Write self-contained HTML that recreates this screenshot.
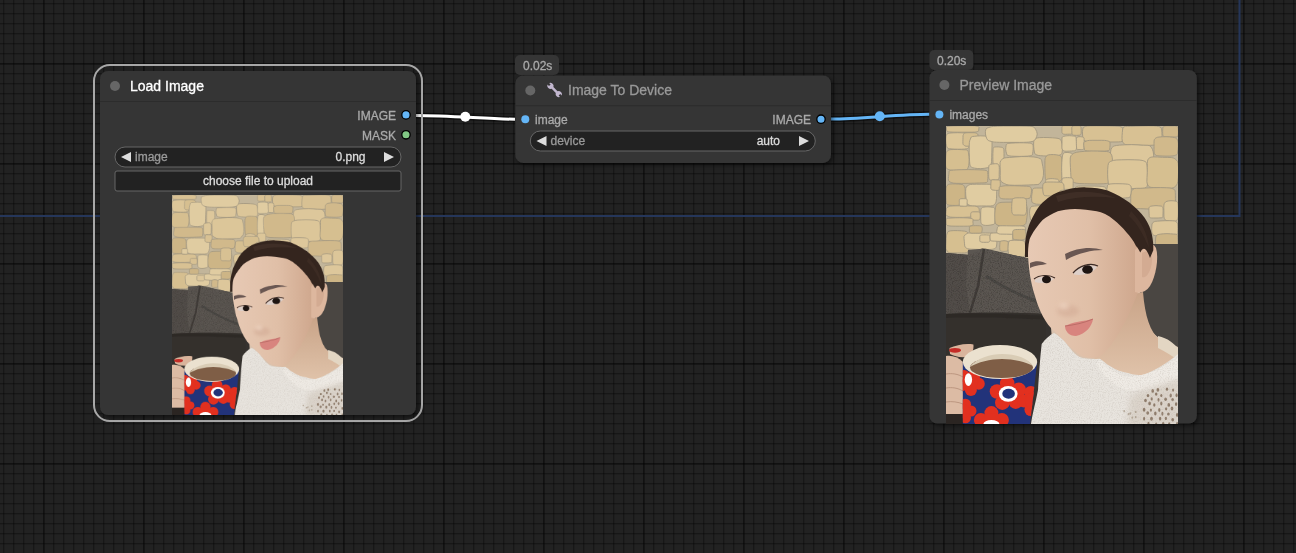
<!DOCTYPE html>
<html><head><meta charset="utf-8">
<style>
html,body{margin:0;padding:0;width:1296px;height:553px;overflow:hidden;}
body{background-color:#222;
background-image:
 repeating-linear-gradient(to right, transparent 0 43px, rgba(0,0,0,0.27) 43px 45px, transparent 45px 100px),
 repeating-linear-gradient(to bottom, transparent 0 63px, rgba(0,0,0,0.27) 63px 65px, transparent 65px 100px),
 repeating-linear-gradient(to right, transparent 0 3px, rgba(0,0,0,0.33) 3px 4px, rgba(0,0,0,0.12) 4px 5px, transparent 5px 10px),
 repeating-linear-gradient(to bottom, transparent 0 3px, rgba(0,0,0,0.33) 3px 4px, rgba(0,0,0,0.12) 4px 5px, transparent 5px 10px);
}
svg{position:absolute;left:0;top:0;will-change:transform;}
text{font-family:"Liberation Sans",sans-serif;}
</style></head><body>
<svg width="1296" height="553" viewBox="0 0 1296 553">
<defs>
 <filter id="tex" x="0" y="0" width="100%" height="100%" filterUnits="objectBoundingBox">
  <feTurbulence type="fractalNoise" baseFrequency="0.9" numOctaves="2" seed="4" result="n"/>
  <feColorMatrix in="n" type="matrix" values="0 0 0 0 0  0 0 0 0 0  0 0 0 0 0  0 0 0 -2.2 1.25" result="a"/>
  <feComposite in="SourceGraphic" in2="a" operator="in"/>
 </filter>
 <filter id="blur2" x="-50%" y="-50%" width="200%" height="200%"><feGaussianBlur stdDeviation="2"/></filter>
 <filter id="blur3" x="-20%" y="-20%" width="140%" height="140%"><feGaussianBlur stdDeviation="3"/></filter>
 <filter id="blur06" x="-5%" y="-5%" width="110%" height="110%"><feGaussianBlur stdDeviation="0.6"/></filter>
 <filter id="sh" x="-10%" y="-10%" width="120%" height="120%">
  <feDropShadow dx="2" dy="2" stdDeviation="2" flood-color="#000" flood-opacity="0.5"/>
 </filter>
 <symbol id="photo" viewBox="0 0 232 298" preserveAspectRatio="none">
<defs>
<linearGradient id="faceg" x1="0" y1="0" x2="1" y2="0">
 <stop offset="0" stop-color="#e7c9b4"/><stop offset="0.55" stop-color="#e0bfa7"/><stop offset="1" stop-color="#cea68c"/>
</linearGradient>
<linearGradient id="neckg" x1="0" y1="0" x2="0" y2="1">
 <stop offset="0" stop-color="#c9a488"/><stop offset="1" stop-color="#e0c3aa"/>
</linearGradient>
<clipPath id="mugclip"><path d="M16.8 236 L16.8 298 L84 298 L91.2 236 Z"/></clipPath>
</defs>
<rect width="232" height="298" fill="#c2b59a"/>
<g filter="url(#blur06)">
<path d="M33.0 1.9 Q32.7 3.0 32.8 4.0 Q33.0 5.1 32.1 5.3 Q31.3 5.6 30.6 5.8 Q30.0 6.0 28.4 6.1 Q26.8 6.2 21.6 6.2 Q16.5 6.2 11.3 6.2 Q6.1 6.2 4.8 6.0 Q3.6 5.9 2.4 5.8 Q1.3 5.6 1.0 5.3 Q0.8 5.0 0.6 4.0 Q0.4 3.0 0.4 2.0 Q0.3 1.0 0.6 0.6 Q0.8 0.3 2.1 0.2 Q3.5 0.1 4.9 -0.0 Q6.3 -0.1 11.4 -0.2 Q16.5 -0.3 21.9 -0.3 Q27.3 -0.3 28.7 -0.2 Q30.0 -0.0 30.8 0.2 Q31.7 0.4 32.5 0.6 Q33.4 0.9 33.0 1.9Z" fill="#d8c193" stroke="#a39780" stroke-width="0.9"/>
<path d="M23.3 12.5 Q23.3 15.0 23.3 17.6 Q23.4 20.1 23.1 20.9 Q22.7 21.7 22.1 22.1 Q21.5 22.6 20.3 22.8 Q19.2 23.1 15.5 23.2 Q11.8 23.3 8.1 23.1 Q4.5 22.8 3.3 22.7 Q2.0 22.6 1.6 22.0 Q1.1 21.5 0.8 20.7 Q0.4 20.0 0.0 17.5 Q-0.4 15.0 -0.2 12.4 Q-0.0 9.8 0.3 9.1 Q0.7 8.3 1.4 7.9 Q2.1 7.5 3.2 7.2 Q4.3 6.9 8.0 6.8 Q11.7 6.6 15.5 6.8 Q19.2 7.0 20.5 7.1 Q21.7 7.2 22.2 7.8 Q22.6 8.4 22.9 9.2 Q23.2 10.0 23.3 12.5Z" fill="#dcc699" stroke="#a39780" stroke-width="0.9"/>
<path d="M32.1 11.4 Q32.1 13.5 32.1 15.6 Q32.1 17.7 31.9 18.3 Q31.6 19.0 31.3 19.4 Q30.9 19.9 30.2 20.0 Q29.4 20.2 27.0 20.2 Q24.5 20.1 22.0 20.2 Q19.5 20.4 19.0 19.9 Q18.4 19.5 18.0 19.2 Q17.5 18.9 17.1 18.4 Q16.8 17.8 16.9 15.6 Q17.0 13.5 17.0 11.4 Q16.9 9.3 17.3 8.8 Q17.7 8.3 17.9 7.7 Q18.2 7.2 18.9 7.0 Q19.6 6.8 22.0 6.7 Q24.5 6.7 27.0 6.7 Q29.5 6.7 30.1 7.1 Q30.6 7.4 31.2 7.7 Q31.7 8.0 31.9 8.6 Q32.1 9.3 32.1 11.4Z" fill="#d6bf90" stroke="#a39780" stroke-width="0.9"/>
<path d="M46.0 21.0 Q45.8 26.2 45.7 31.2 Q45.6 36.2 45.3 37.7 Q45.1 39.3 44.6 40.4 Q44.1 41.5 42.9 41.6 Q41.6 41.7 38.2 42.3 Q34.8 42.9 31.2 42.5 Q27.7 42.1 26.6 41.7 Q25.4 41.4 24.8 40.5 Q24.1 39.7 23.8 38.1 Q23.6 36.4 23.4 31.3 Q23.1 26.3 23.2 21.0 Q23.2 15.7 23.8 14.4 Q24.4 13.2 24.8 11.9 Q25.2 10.7 26.4 10.5 Q27.7 10.4 31.2 10.0 Q34.7 9.7 38.3 10.0 Q41.9 10.2 42.8 10.9 Q43.8 11.5 44.4 12.4 Q45.1 13.2 45.6 14.5 Q46.2 15.8 46.0 21.0Z" fill="#e0cca1" stroke="#a39780" stroke-width="0.9"/>
<path d="M90.7 5.5 Q91.8 8.0 90.7 10.5 Q89.7 13.0 89.3 13.8 Q88.9 14.6 87.6 15.1 Q86.2 15.6 84.1 15.9 Q82.0 16.3 73.7 16.4 Q65.5 16.4 57.3 16.4 Q49.1 16.3 47.1 15.9 Q45.2 15.4 43.7 15.0 Q42.2 14.6 41.5 13.8 Q40.8 13.1 40.0 10.5 Q39.2 8.0 39.4 5.3 Q39.5 2.7 41.1 2.1 Q42.7 1.5 44.0 1.1 Q45.4 0.6 47.6 0.4 Q49.9 0.1 57.7 0.0 Q65.5 -0.0 73.5 -0.0 Q81.4 -0.0 83.9 0.2 Q86.3 0.4 87.4 0.9 Q88.5 1.5 89.0 2.3 Q89.5 3.1 90.7 5.5Z" fill="#e0cca1" stroke="#a39780" stroke-width="0.9"/>
<path d="M22.9 30.6 Q23.3 33.8 23.0 37.0 Q22.8 40.2 22.3 41.1 Q21.9 41.9 21.6 42.8 Q21.2 43.6 20.1 44.0 Q19.1 44.4 15.3 44.3 Q11.5 44.3 7.8 44.3 Q4.1 44.2 3.1 43.7 Q2.1 43.3 1.3 42.9 Q0.4 42.4 0.0 41.5 Q-0.4 40.5 -0.4 37.1 Q-0.4 33.8 -0.2 30.5 Q-0.0 27.2 0.4 26.3 Q0.9 25.4 1.5 24.8 Q2.1 24.2 3.2 23.9 Q4.2 23.5 7.9 23.5 Q11.5 23.4 15.1 23.6 Q18.6 23.8 20.0 23.8 Q21.3 23.8 21.7 24.6 Q22.2 25.3 22.4 26.4 Q22.6 27.4 22.9 30.6Z" fill="#d6bf90" stroke="#a39780" stroke-width="0.9"/>
<path d="M58.0 27.5 Q58.0 30.5 58.0 33.4 Q58.0 36.4 57.8 37.2 Q57.6 38.1 57.3 38.7 Q57.1 39.3 56.5 39.5 Q56.0 39.6 54.2 40.1 Q52.5 40.5 50.7 40.3 Q48.9 40.1 48.4 39.6 Q48.0 39.2 47.7 38.7 Q47.3 38.2 47.1 37.3 Q46.9 36.5 46.9 33.5 Q46.8 30.5 46.9 27.6 Q47.0 24.6 47.1 23.5 Q47.1 22.4 47.4 21.8 Q47.7 21.2 48.3 21.1 Q48.9 21.0 50.7 20.9 Q52.5 20.8 54.2 21.1 Q56.0 21.3 56.5 21.6 Q57.0 21.9 57.4 22.3 Q57.7 22.8 57.9 23.7 Q58.0 24.5 58.0 27.5Z" fill="#ddc79b" stroke="#a39780" stroke-width="0.9"/>
<path d="M87.2 21.3 Q87.2 23.5 86.9 25.6 Q86.6 27.6 86.5 28.4 Q86.5 29.1 85.5 29.4 Q84.4 29.6 83.3 29.9 Q82.2 30.2 77.8 30.3 Q73.5 30.5 69.1 30.3 Q64.8 30.2 63.7 29.9 Q62.6 29.6 61.7 29.3 Q60.8 29.0 60.7 28.3 Q60.6 27.6 60.0 25.5 Q59.5 23.5 59.8 21.4 Q60.1 19.3 60.3 18.6 Q60.5 17.9 61.6 17.6 Q62.6 17.4 63.9 17.2 Q65.2 17.0 69.3 16.9 Q73.5 16.7 77.8 16.8 Q82.0 16.9 83.4 17.1 Q84.7 17.2 85.4 17.6 Q86.2 18.0 86.7 18.6 Q87.2 19.2 87.2 21.3Z" fill="#ddc79b" stroke="#a39780" stroke-width="0.9"/>
<path d="M116.0 18.2 Q116.5 21.0 116.4 24.0 Q116.2 26.9 115.7 27.7 Q115.3 28.6 114.2 28.9 Q113.2 29.3 112.0 29.7 Q110.9 30.0 106.4 30.1 Q102.0 30.1 97.7 29.9 Q93.5 29.7 92.2 29.4 Q91.0 29.1 90.1 28.7 Q89.2 28.3 88.8 27.5 Q88.4 26.6 88.0 23.8 Q87.6 21.0 87.6 18.0 Q87.6 15.0 88.3 14.3 Q89.0 13.6 89.6 12.9 Q90.1 12.2 91.5 11.9 Q92.8 11.6 97.4 11.5 Q102.0 11.5 106.4 11.8 Q110.8 12.1 112.0 12.4 Q113.2 12.7 114.0 13.2 Q114.7 13.7 115.1 14.6 Q115.5 15.4 116.0 18.2Z" fill="#dcc699" stroke="#a39780" stroke-width="0.9"/>
<path d="M96.9 40.7 Q97.9 45.0 97.4 49.5 Q96.8 53.9 95.7 55.0 Q94.5 56.0 94.0 57.2 Q93.5 58.4 91.2 58.6 Q88.8 58.7 82.2 59.0 Q75.5 59.3 68.6 59.3 Q61.6 59.3 60.1 58.4 Q58.6 57.6 57.2 57.0 Q55.9 56.3 54.9 55.2 Q54.0 54.0 54.2 49.5 Q54.4 45.0 54.1 40.4 Q53.7 35.9 54.7 34.7 Q55.8 33.6 56.8 32.7 Q57.9 31.9 60.2 31.7 Q62.5 31.6 69.0 31.0 Q75.5 30.3 82.4 30.6 Q89.2 30.9 91.1 31.5 Q92.9 32.0 94.3 32.7 Q95.7 33.3 95.8 34.9 Q95.9 36.4 96.9 40.7Z" fill="#dcc699" stroke="#a39780" stroke-width="0.9"/>
<path d="M41.9 48.4 Q42.0 50.5 41.8 52.5 Q41.6 54.6 41.6 55.4 Q41.6 56.1 40.3 56.5 Q39.1 56.8 36.9 56.9 Q34.6 56.9 28.4 57.2 Q22.3 57.4 15.6 57.4 Q9.0 57.4 7.3 57.1 Q5.6 56.8 4.7 56.3 Q3.8 55.9 3.0 55.3 Q2.2 54.7 2.4 52.6 Q2.5 50.5 2.8 48.5 Q3.1 46.5 3.0 45.7 Q2.8 44.8 4.2 44.5 Q5.6 44.2 7.6 44.1 Q9.5 43.9 15.9 43.7 Q22.2 43.5 28.6 43.7 Q34.9 43.9 37.0 44.0 Q39.2 44.1 40.3 44.5 Q41.4 44.9 41.6 45.7 Q41.7 46.4 41.9 48.4Z" fill="#d1b98b" stroke="#a39780" stroke-width="0.9"/>
<path d="M53.3 43.4 Q53.2 46.0 53.2 48.6 Q53.3 51.2 53.0 51.9 Q52.8 52.6 52.5 53.1 Q52.3 53.6 51.8 53.9 Q51.4 54.3 49.7 54.1 Q48.0 53.9 46.3 54.1 Q44.7 54.2 44.1 54.0 Q43.6 53.8 43.4 53.3 Q43.1 52.7 42.9 52.0 Q42.7 51.3 42.7 48.6 Q42.7 46.0 42.7 43.4 Q42.7 40.7 42.9 39.9 Q43.0 39.2 43.5 38.9 Q43.9 38.7 44.3 38.4 Q44.8 38.2 46.4 38.0 Q48.0 37.8 49.7 37.7 Q51.4 37.7 51.9 38.0 Q52.3 38.3 52.6 38.8 Q52.9 39.3 53.1 40.0 Q53.3 40.7 53.3 43.4Z" fill="#dcc699" stroke="#a39780" stroke-width="0.9"/>
<path d="M116.1 38.2 Q116.2 42.5 116.2 46.8 Q116.2 51.2 115.9 52.4 Q115.5 53.6 115.0 54.2 Q114.4 54.9 113.7 55.4 Q113.0 55.9 110.2 56.1 Q107.5 56.2 104.7 56.2 Q101.9 56.2 101.3 55.4 Q100.7 54.7 100.1 54.1 Q99.5 53.6 99.3 52.2 Q99.1 50.9 99.0 46.7 Q98.9 42.5 98.9 38.1 Q98.8 33.8 99.1 32.6 Q99.5 31.4 100.0 30.7 Q100.4 29.9 101.2 29.4 Q101.9 28.8 104.7 28.6 Q107.5 28.4 110.2 28.8 Q112.9 29.2 113.8 29.5 Q114.6 29.8 115.1 30.6 Q115.5 31.4 115.8 32.7 Q116.0 34.0 116.1 38.2Z" fill="#cdb586" stroke="#a39780" stroke-width="0.9"/>
<path d="M19.2 65.1 Q19.2 68.5 19.2 71.9 Q19.2 75.4 18.8 76.3 Q18.4 77.2 17.8 77.6 Q17.2 78.1 16.4 78.6 Q15.6 79.0 12.5 79.3 Q9.5 79.5 6.4 79.4 Q3.2 79.3 2.3 79.0 Q1.4 78.7 0.8 78.0 Q0.3 77.4 0.3 76.2 Q0.2 75.0 0.0 71.8 Q-0.2 68.5 -0.1 65.2 Q0.1 61.9 0.4 60.9 Q0.7 59.9 1.2 59.4 Q1.8 58.8 2.6 58.3 Q3.4 57.9 6.4 57.9 Q9.5 57.9 12.5 58.1 Q15.4 58.3 16.3 58.5 Q17.2 58.8 17.7 59.5 Q18.1 60.1 18.7 60.9 Q19.2 61.7 19.2 65.1Z" fill="#cdb586" stroke="#a39780" stroke-width="0.9"/>
<path d="M50.7 65.4 Q50.7 69.0 50.5 72.4 Q50.2 75.9 49.7 76.8 Q49.2 77.8 48.5 78.5 Q47.8 79.3 46.5 79.7 Q45.2 80.2 40.3 80.0 Q35.4 79.8 30.4 80.1 Q25.4 80.3 24.3 79.7 Q23.2 79.0 22.0 78.6 Q20.9 78.2 20.7 77.0 Q20.5 75.8 20.1 72.4 Q19.6 69.0 19.6 65.4 Q19.6 61.7 20.4 60.9 Q21.2 60.0 22.1 59.4 Q22.9 58.8 24.3 58.5 Q25.8 58.2 30.6 58.2 Q35.3 58.2 40.1 58.2 Q44.9 58.2 46.3 58.5 Q47.7 58.9 48.6 59.4 Q49.5 60.0 50.2 60.9 Q50.8 61.9 50.7 65.4Z" fill="#e0cca1" stroke="#a39780" stroke-width="0.9"/>
<path d="M54.3 57.3 Q54.3 59.0 54.2 60.6 Q54.2 62.3 53.9 62.7 Q53.7 63.1 53.6 63.6 Q53.5 64.0 53.0 64.1 Q52.5 64.3 51.0 64.4 Q49.5 64.4 48.1 64.2 Q46.6 64.0 46.2 63.9 Q45.7 63.7 45.5 63.4 Q45.3 63.1 45.0 62.7 Q44.7 62.4 44.8 60.7 Q44.8 59.0 44.9 57.4 Q45.0 55.8 45.1 55.3 Q45.2 54.8 45.3 54.4 Q45.5 54.0 46.0 53.9 Q46.5 53.7 48.0 53.8 Q49.5 53.9 50.9 53.9 Q52.4 54.0 52.9 54.0 Q53.5 54.0 53.7 54.4 Q53.9 54.7 54.1 55.2 Q54.2 55.7 54.3 57.3Z" fill="#d8c193" stroke="#a39780" stroke-width="0.9"/>
<path d="M85.5 64.3 Q85.5 66.5 85.0 68.6 Q84.4 70.6 84.3 71.4 Q84.3 72.1 83.0 72.3 Q81.7 72.6 80.2 72.7 Q78.6 72.8 73.7 72.9 Q68.8 73.0 63.7 73.0 Q58.7 73.0 57.0 72.9 Q55.4 72.7 54.7 72.3 Q54.0 71.8 53.5 71.2 Q53.0 70.6 52.9 68.6 Q52.9 66.5 53.1 64.5 Q53.3 62.5 53.2 61.6 Q53.1 60.8 54.3 60.6 Q55.6 60.4 56.9 60.0 Q58.2 59.7 63.5 59.7 Q68.7 59.7 73.7 59.9 Q78.6 60.1 80.4 60.2 Q82.2 60.2 83.3 60.5 Q84.3 60.9 84.9 61.5 Q85.4 62.1 85.5 64.3Z" fill="#d1b98b" stroke="#a39780" stroke-width="0.9"/>
<path d="M113.1 57.7 Q113.1 60.0 113.0 62.2 Q113.0 64.4 112.8 65.1 Q112.6 65.8 112.3 66.3 Q112.0 66.8 111.3 66.9 Q110.5 67.0 108.4 67.1 Q106.3 67.2 104.1 67.1 Q102.0 66.9 101.3 66.7 Q100.7 66.6 100.4 66.1 Q100.1 65.6 99.8 65.0 Q99.5 64.4 99.5 62.2 Q99.5 60.0 99.4 57.7 Q99.3 55.4 99.5 54.8 Q99.8 54.1 100.3 53.8 Q100.7 53.5 101.3 53.2 Q101.9 52.9 104.1 52.7 Q106.2 52.5 108.4 52.8 Q110.5 53.1 111.3 53.2 Q112.0 53.2 112.3 53.7 Q112.6 54.2 112.9 54.8 Q113.1 55.5 113.1 57.7Z" fill="#ddc79b" stroke="#a39780" stroke-width="0.9"/>
<path d="M107.5 67.3 Q107.6 70.0 107.2 72.5 Q106.8 75.1 106.5 75.8 Q106.1 76.5 105.5 76.9 Q105.0 77.4 104.0 77.6 Q103.0 77.9 99.8 78.2 Q96.5 78.5 93.1 78.3 Q89.7 78.2 88.9 77.8 Q88.1 77.3 87.2 77.1 Q86.3 76.9 86.0 76.1 Q85.6 75.3 85.6 72.7 Q85.5 70.0 86.0 67.5 Q86.4 65.1 86.5 64.2 Q86.6 63.3 87.1 62.8 Q87.6 62.2 88.7 62.1 Q89.9 62.0 93.2 62.0 Q96.5 62.1 99.9 62.0 Q103.3 61.8 104.2 62.2 Q105.1 62.5 105.7 62.9 Q106.3 63.4 106.9 64.0 Q107.4 64.7 107.5 67.3Z" fill="#d6bf90" stroke="#a39780" stroke-width="0.9"/>
<path d="M33.2 83.7 Q33.3 85.5 33.3 87.3 Q33.2 89.1 32.5 89.5 Q31.8 90.0 31.1 90.4 Q30.3 90.8 28.7 90.9 Q27.1 91.0 21.9 91.2 Q16.8 91.5 11.3 91.4 Q5.8 91.3 4.4 91.1 Q3.1 90.8 2.3 90.4 Q1.6 90.0 0.6 89.6 Q-0.4 89.2 -0.1 87.4 Q0.1 85.5 0.3 83.7 Q0.4 82.0 1.1 81.5 Q1.9 81.0 2.6 80.7 Q3.2 80.3 4.7 80.1 Q6.2 79.9 11.5 79.8 Q16.7 79.8 21.9 79.9 Q27.0 80.0 28.7 80.1 Q30.4 80.2 31.0 80.6 Q31.6 81.0 32.3 81.5 Q33.0 82.0 33.2 83.7Z" fill="#d8c193" stroke="#a39780" stroke-width="0.9"/>
<path d="M49.2 87.1 Q49.3 90.0 49.2 92.9 Q49.0 95.7 48.8 96.5 Q48.5 97.3 48.2 97.9 Q47.9 98.5 47.1 98.6 Q46.4 98.7 44.2 99.1 Q42.0 99.5 39.7 99.4 Q37.4 99.3 36.8 98.8 Q36.3 98.2 35.7 98.0 Q35.1 97.7 35.0 96.8 Q34.8 95.9 34.7 92.9 Q34.7 90.0 34.7 87.1 Q34.8 84.1 35.0 83.3 Q35.2 82.4 35.7 82.0 Q36.2 81.5 36.9 81.3 Q37.6 81.1 39.8 80.9 Q42.0 80.7 44.2 81.0 Q46.4 81.2 47.2 81.3 Q48.0 81.3 48.4 81.9 Q48.8 82.4 48.9 83.3 Q49.1 84.2 49.2 87.1Z" fill="#e0cca1" stroke="#a39780" stroke-width="0.9"/>
<path d="M81.3 84.2 Q81.5 88.0 80.9 91.7 Q80.4 95.4 80.1 96.6 Q79.9 97.9 79.0 98.5 Q78.1 99.2 76.7 99.7 Q75.4 100.3 70.2 100.4 Q65.0 100.5 59.8 100.4 Q54.6 100.2 53.3 99.8 Q51.9 99.3 50.8 98.7 Q49.7 98.2 49.3 96.9 Q48.9 95.7 48.8 91.9 Q48.6 88.0 49.1 84.3 Q49.5 80.6 50.1 79.5 Q50.7 78.5 51.5 77.8 Q52.3 77.1 53.7 76.7 Q55.0 76.2 60.0 76.2 Q65.0 76.2 70.2 76.0 Q75.4 75.7 76.7 76.3 Q78.1 76.8 79.0 77.4 Q80.0 78.1 80.5 79.2 Q81.0 80.3 81.3 84.2Z" fill="#cdb586" stroke="#a39780" stroke-width="0.9"/>
<path d="M80.5 77.8 Q80.6 80.5 80.6 83.2 Q80.6 85.9 80.2 86.6 Q79.9 87.3 79.7 88.0 Q79.5 88.8 78.8 89.0 Q78.1 89.3 75.7 89.1 Q73.3 88.9 70.9 89.0 Q68.6 89.1 67.8 88.9 Q67.1 88.7 66.7 88.1 Q66.4 87.5 66.1 86.8 Q65.7 86.1 65.7 83.3 Q65.6 80.5 65.8 77.8 Q66.1 75.2 66.2 74.2 Q66.2 73.3 66.8 73.0 Q67.3 72.7 67.9 72.3 Q68.5 71.9 70.9 71.8 Q73.2 71.8 75.7 71.8 Q78.1 71.7 78.6 72.2 Q79.1 72.8 79.7 73.0 Q80.3 73.2 80.4 74.2 Q80.5 75.1 80.5 77.8Z" fill="#d8c193" stroke="#a39780" stroke-width="0.9"/>
<path d="M34.2 88.7 Q34.3 90.0 34.2 91.3 Q34.0 92.6 33.9 93.0 Q33.7 93.3 33.5 93.6 Q33.3 93.8 32.9 94.0 Q32.5 94.3 31.0 94.2 Q29.5 94.2 28.0 94.2 Q26.5 94.2 26.2 94.0 Q25.8 93.8 25.5 93.5 Q25.3 93.3 25.1 93.0 Q24.9 92.6 24.8 91.3 Q24.7 90.0 24.7 88.6 Q24.8 87.3 24.9 86.9 Q25.1 86.5 25.4 86.3 Q25.7 86.2 26.1 86.0 Q26.5 85.8 28.0 85.8 Q29.5 85.8 31.0 85.8 Q32.5 85.8 32.8 86.0 Q33.2 86.2 33.6 86.3 Q34.0 86.4 34.0 86.9 Q34.0 87.4 34.2 88.7Z" fill="#d8c193" stroke="#a39780" stroke-width="0.9"/>
<path d="M21.2 75.3 Q21.1 76.5 21.1 77.7 Q21.2 78.8 21.1 79.2 Q21.0 79.6 20.8 79.9 Q20.6 80.1 20.2 80.1 Q19.7 80.2 18.5 80.2 Q17.3 80.2 16.0 80.1 Q14.8 80.1 14.3 80.1 Q13.9 80.1 13.8 79.8 Q13.7 79.5 13.5 79.2 Q13.3 78.9 13.3 77.7 Q13.4 76.5 13.3 75.3 Q13.3 74.1 13.4 73.7 Q13.4 73.3 13.8 73.2 Q14.1 73.1 14.4 72.9 Q14.7 72.7 16.0 72.7 Q17.2 72.7 18.5 72.7 Q19.8 72.7 20.2 72.8 Q20.5 73.0 20.7 73.3 Q20.9 73.5 21.1 73.8 Q21.3 74.1 21.2 75.3Z" fill="#e0cca1" stroke="#a39780" stroke-width="0.9"/>
<path d="M27.0 94.6 Q26.8 96.0 27.1 97.4 Q27.4 98.8 26.8 99.1 Q26.2 99.5 25.3 99.7 Q24.5 99.9 23.3 100.1 Q22.2 100.2 17.8 100.2 Q13.5 100.2 9.3 100.2 Q5.0 100.1 3.9 100.0 Q2.8 99.8 2.0 99.6 Q1.1 99.4 0.7 99.0 Q0.3 98.6 0.2 97.3 Q0.0 96.0 0.1 94.7 Q0.2 93.4 0.4 92.9 Q0.5 92.4 1.6 92.3 Q2.7 92.2 4.0 92.1 Q5.3 92.0 9.4 91.8 Q13.5 91.7 17.7 91.8 Q21.9 91.9 23.0 92.1 Q24.2 92.2 25.0 92.4 Q25.9 92.6 26.6 92.9 Q27.3 93.3 27.0 94.6Z" fill="#d8c193" stroke="#a39780" stroke-width="0.9"/>
<path d="M127.2 2.6 Q127.2 4.0 127.1 5.3 Q127.0 6.6 126.8 7.0 Q126.6 7.3 126.3 7.6 Q126.0 7.8 125.6 8.0 Q125.2 8.3 123.3 8.2 Q121.5 8.2 119.6 8.3 Q117.8 8.3 117.4 8.1 Q117.0 7.8 116.6 7.6 Q116.3 7.4 116.1 7.0 Q115.9 6.7 115.9 5.3 Q115.9 4.0 115.9 2.7 Q115.9 1.4 116.0 0.9 Q116.0 0.4 116.4 0.2 Q116.7 -0.0 117.3 -0.2 Q117.8 -0.3 119.7 -0.3 Q121.5 -0.3 123.4 -0.3 Q125.2 -0.3 125.8 -0.2 Q126.3 -0.1 126.6 0.2 Q126.8 0.5 127.0 0.9 Q127.2 1.3 127.2 2.6Z" fill="#d8c193" stroke="#a39780" stroke-width="0.9"/>
<path d="M135.1 3.1 Q135.2 4.5 135.2 6.0 Q135.2 7.5 135.0 7.9 Q134.7 8.2 134.6 8.6 Q134.5 9.0 134.0 9.1 Q133.5 9.2 132.0 9.3 Q130.5 9.4 129.0 9.3 Q127.5 9.2 127.1 9.0 Q126.8 8.7 126.5 8.5 Q126.2 8.3 126.0 7.9 Q125.9 7.4 125.9 6.0 Q125.8 4.5 125.8 3.0 Q125.8 1.5 125.9 1.0 Q126.1 0.6 126.4 0.4 Q126.7 0.2 127.1 0.1 Q127.6 -0.1 129.0 -0.2 Q130.5 -0.2 132.0 -0.2 Q133.5 -0.2 133.9 0.0 Q134.2 0.3 134.6 0.4 Q134.9 0.6 135.0 1.1 Q135.0 1.6 135.1 3.1Z" fill="#d6bf90" stroke="#a39780" stroke-width="0.9"/>
<path d="M177.7 5.5 Q178.1 8.0 177.6 10.5 Q177.2 13.0 177.1 13.9 Q177.0 14.9 175.9 15.4 Q174.7 15.9 172.4 15.9 Q170.1 16.0 163.6 16.0 Q157.0 16.0 150.6 15.9 Q144.1 15.9 142.3 15.6 Q140.5 15.3 139.2 14.9 Q137.9 14.6 137.4 13.8 Q137.0 13.0 136.7 10.5 Q136.4 8.0 136.5 5.5 Q136.7 3.0 137.1 2.1 Q137.5 1.3 138.5 0.8 Q139.4 0.2 141.5 -0.0 Q143.6 -0.2 150.3 -0.2 Q157.0 -0.2 163.5 -0.1 Q170.1 0.0 172.1 0.2 Q174.1 0.4 175.1 0.9 Q176.2 1.4 176.8 2.2 Q177.4 2.9 177.7 5.5Z" fill="#d8c193" stroke="#a39780" stroke-width="0.9"/>
<path d="M215.9 6.5 Q216.2 9.5 215.8 12.5 Q215.5 15.5 215.1 16.5 Q214.7 17.5 213.5 17.9 Q212.3 18.4 210.6 18.8 Q208.9 19.2 202.4 19.4 Q196.0 19.5 189.9 19.1 Q183.8 18.7 181.5 18.7 Q179.2 18.7 178.5 18.0 Q177.7 17.3 176.9 16.5 Q176.1 15.6 176.0 12.6 Q176.0 9.5 176.3 6.5 Q176.6 3.5 176.8 2.5 Q177.1 1.5 178.1 0.9 Q179.1 0.2 181.5 0.3 Q183.8 0.3 189.9 0.1 Q196.0 -0.1 202.4 -0.2 Q208.8 -0.2 210.7 0.1 Q212.6 0.4 213.9 0.9 Q215.2 1.4 215.4 2.4 Q215.7 3.4 215.9 6.5Z" fill="#d8c193" stroke="#a39780" stroke-width="0.9"/>
<path d="M232.3 3.7 Q232.5 5.5 232.4 7.3 Q232.3 9.2 232.0 9.7 Q231.8 10.3 231.4 10.6 Q231.0 11.0 230.1 11.0 Q229.2 11.0 226.9 11.0 Q224.5 11.1 222.2 11.0 Q219.8 11.0 219.0 10.9 Q218.2 10.8 217.8 10.5 Q217.3 10.2 217.0 9.7 Q216.7 9.2 216.7 7.4 Q216.6 5.5 216.7 3.7 Q216.8 1.9 217.0 1.3 Q217.3 0.8 217.8 0.5 Q218.3 0.2 219.0 0.0 Q219.7 -0.2 222.1 -0.1 Q224.5 -0.0 227.0 -0.1 Q229.4 -0.3 230.0 0.0 Q230.6 0.3 231.2 0.5 Q231.8 0.7 232.0 1.3 Q232.2 1.9 232.3 3.7Z" fill="#d1b98b" stroke="#a39780" stroke-width="0.9"/>
<path d="M130.5 15.2 Q130.8 17.5 130.7 19.9 Q130.6 22.3 130.3 23.0 Q130.1 23.7 129.8 24.2 Q129.4 24.7 128.6 24.8 Q127.8 24.8 125.5 25.0 Q123.3 25.1 120.8 25.2 Q118.4 25.3 117.9 24.9 Q117.4 24.4 116.9 24.0 Q116.5 23.6 116.1 23.0 Q115.8 22.4 115.9 20.0 Q116.1 17.5 116.0 15.1 Q115.9 12.7 116.0 11.8 Q116.1 11.0 116.7 10.8 Q117.3 10.5 118.0 10.3 Q118.6 10.0 120.9 9.8 Q123.2 9.6 125.5 9.8 Q127.8 10.1 128.6 10.2 Q129.3 10.4 129.7 10.8 Q130.1 11.2 130.2 12.0 Q130.3 12.9 130.5 15.2Z" fill="#e0cca1" stroke="#a39780" stroke-width="0.9"/>
<path d="M138.2 15.3 Q138.2 17.2 138.1 19.2 Q138.0 21.1 138.0 21.8 Q137.9 22.5 137.7 22.9 Q137.5 23.3 137.1 23.4 Q136.7 23.6 135.5 23.6 Q134.3 23.6 133.0 23.6 Q131.7 23.7 131.3 23.6 Q130.9 23.4 130.8 22.9 Q130.6 22.4 130.6 21.8 Q130.5 21.2 130.4 19.2 Q130.3 17.3 130.3 15.2 Q130.3 13.2 130.4 12.6 Q130.5 11.9 130.8 11.7 Q131.1 11.4 131.4 11.1 Q131.7 10.7 133.0 10.7 Q134.2 10.6 135.5 10.8 Q136.8 10.9 137.1 11.2 Q137.4 11.4 137.7 11.6 Q138.1 11.8 138.1 12.5 Q138.1 13.3 138.2 15.3Z" fill="#ddc79b" stroke="#a39780" stroke-width="0.9"/>
<path d="M164.1 18.0 Q164.1 19.8 163.9 21.4 Q163.7 23.1 163.6 23.7 Q163.5 24.3 162.4 24.5 Q161.3 24.6 160.3 24.9 Q159.3 25.2 155.2 25.2 Q151.0 25.3 146.8 25.3 Q142.5 25.3 141.4 25.0 Q140.4 24.8 139.4 24.6 Q138.5 24.3 138.5 23.7 Q138.6 23.1 138.1 21.4 Q137.7 19.8 137.7 18.0 Q137.7 16.2 138.5 15.8 Q139.3 15.5 140.1 15.2 Q140.8 14.9 141.7 14.6 Q142.7 14.3 146.9 14.3 Q151.0 14.3 155.2 14.3 Q159.4 14.3 160.4 14.6 Q161.4 14.8 162.2 15.1 Q163.0 15.3 163.6 15.8 Q164.1 16.3 164.1 18.0Z" fill="#d1b98b" stroke="#a39780" stroke-width="0.9"/>
<path d="M207.2 25.8 Q207.9 29.0 207.7 32.3 Q207.4 35.6 206.2 36.4 Q205.1 37.1 203.8 37.6 Q202.5 38.1 201.0 38.7 Q199.5 39.3 192.5 39.4 Q185.5 39.4 179.0 39.0 Q172.5 38.6 170.2 38.6 Q167.8 38.5 166.8 37.8 Q165.9 37.2 165.2 36.2 Q164.6 35.3 164.4 32.2 Q164.2 29.0 164.6 25.9 Q164.9 22.8 165.7 21.9 Q166.5 21.1 167.4 20.4 Q168.4 19.8 170.3 19.5 Q172.2 19.1 178.8 18.8 Q185.5 18.4 192.0 18.9 Q198.6 19.3 201.1 19.3 Q203.6 19.3 204.2 20.1 Q204.9 21.0 205.6 21.8 Q206.4 22.7 207.2 25.8Z" fill="#ddc79b" stroke="#a39780" stroke-width="0.9"/>
<path d="M232.3 17.4 Q232.5 20.5 232.0 23.4 Q231.5 26.4 231.5 27.4 Q231.4 28.5 230.5 28.8 Q229.6 29.2 228.6 29.6 Q227.6 30.0 223.8 30.1 Q220.0 30.2 216.2 30.0 Q212.5 29.9 211.2 29.7 Q210.0 29.6 209.4 29.0 Q208.8 28.3 208.4 27.5 Q207.9 26.6 208.0 23.6 Q208.1 20.5 208.0 17.4 Q207.9 14.4 208.4 13.5 Q208.9 12.7 209.6 12.2 Q210.3 11.7 211.3 11.3 Q212.4 11.0 216.2 10.8 Q220.0 10.6 223.7 10.9 Q227.3 11.3 228.5 11.6 Q229.6 11.8 230.2 12.4 Q230.8 12.9 231.4 13.7 Q232.0 14.4 232.3 17.4Z" fill="#d1b98b" stroke="#a39780" stroke-width="0.9"/>
<path d="M128.3 36.6 Q128.5 41.0 128.3 45.5 Q128.2 49.9 127.9 51.1 Q127.6 52.2 127.4 53.2 Q127.1 54.2 126.5 54.5 Q125.8 54.7 123.9 54.8 Q122.0 54.9 120.1 54.6 Q118.3 54.3 117.6 54.3 Q116.9 54.3 116.5 53.6 Q116.1 52.8 115.9 51.4 Q115.8 49.9 115.7 45.5 Q115.5 41.0 115.8 36.7 Q116.1 32.5 116.3 31.1 Q116.4 29.8 116.7 28.9 Q117.0 28.0 117.5 27.3 Q118.0 26.6 120.0 26.5 Q122.0 26.3 123.9 26.8 Q125.9 27.3 126.4 27.8 Q126.9 28.3 127.3 28.9 Q127.7 29.6 127.9 30.9 Q128.1 32.2 128.3 36.6Z" fill="#e0cca1" stroke="#a39780" stroke-width="0.9"/>
<path d="M166.5 36.1 Q166.6 41.5 166.3 46.8 Q166.1 52.1 165.5 53.7 Q164.9 55.3 163.7 56.2 Q162.4 57.1 160.4 57.5 Q158.3 57.9 151.6 57.9 Q145.0 57.9 138.5 57.7 Q132.0 57.6 130.1 57.1 Q128.1 56.6 126.7 55.9 Q125.2 55.3 125.1 53.4 Q125.0 51.5 124.7 46.5 Q124.4 41.5 124.2 36.2 Q123.9 30.9 125.0 29.6 Q126.0 28.3 127.3 27.5 Q128.6 26.8 130.4 26.3 Q132.3 25.8 138.7 25.3 Q145.0 24.8 151.5 25.1 Q158.0 25.4 160.4 25.5 Q162.7 25.6 163.8 26.6 Q165.0 27.6 165.7 29.2 Q166.5 30.7 166.5 36.1Z" fill="#d1b98b" stroke="#a39780" stroke-width="0.9"/>
<path d="M201.4 43.7 Q201.6 48.2 201.6 52.9 Q201.6 57.5 201.4 59.1 Q201.2 60.8 200.0 61.6 Q198.9 62.5 196.6 62.5 Q194.2 62.5 188.1 62.6 Q182.0 62.7 175.7 62.8 Q169.5 62.8 167.4 62.6 Q165.2 62.4 164.6 61.2 Q163.9 60.0 163.1 58.8 Q162.2 57.6 161.8 52.9 Q161.5 48.3 161.7 43.5 Q161.9 38.7 162.5 37.3 Q163.1 35.9 164.6 35.4 Q166.0 34.8 167.8 34.3 Q169.7 33.9 175.8 33.8 Q182.0 33.6 188.2 33.8 Q194.3 33.9 196.1 34.4 Q197.9 34.8 199.2 35.5 Q200.4 36.3 200.8 37.7 Q201.2 39.2 201.4 43.7Z" fill="#dcc699" stroke="#a39780" stroke-width="0.9"/>
<path d="M232.5 41.4 Q232.6 46.5 232.3 51.4 Q231.9 56.3 231.3 57.7 Q230.7 59.0 229.9 59.9 Q229.0 60.7 227.9 61.6 Q226.7 62.4 221.6 62.3 Q216.5 62.2 211.7 61.8 Q206.9 61.5 205.2 61.4 Q203.5 61.2 202.7 60.3 Q202.0 59.3 201.3 58.0 Q200.6 56.7 201.0 51.6 Q201.4 46.5 201.3 41.6 Q201.2 36.7 201.5 35.1 Q201.8 33.5 202.6 32.6 Q203.5 31.7 204.9 31.2 Q206.4 30.7 211.4 31.0 Q216.5 31.4 221.3 31.4 Q226.1 31.4 227.4 32.0 Q228.8 32.6 229.6 33.4 Q230.5 34.2 231.5 35.3 Q232.4 36.3 232.5 41.4Z" fill="#d6bf90" stroke="#a39780" stroke-width="0.9"/>
<path d="M229.4 69.2 Q229.3 72.5 229.5 75.8 Q229.6 79.2 228.6 80.1 Q227.6 80.9 226.7 81.7 Q225.8 82.4 223.8 82.8 Q221.7 83.2 214.4 83.3 Q207.0 83.3 200.1 82.9 Q193.2 82.6 190.6 82.5 Q188.1 82.4 186.8 81.9 Q185.4 81.3 185.1 80.2 Q184.7 79.1 184.7 75.8 Q184.8 72.5 184.7 69.2 Q184.7 65.9 185.6 65.0 Q186.6 64.2 187.1 63.2 Q187.6 62.3 190.4 62.3 Q193.1 62.4 200.1 62.0 Q207.0 61.6 214.5 61.6 Q221.9 61.7 224.0 62.0 Q226.1 62.4 227.4 63.0 Q228.7 63.6 229.1 64.7 Q229.4 65.9 229.4 69.2Z" fill="#d1b98b" stroke="#a39780" stroke-width="0.9"/>
<path d="M217.1 84.1 Q217.1 86.0 217.0 87.9 Q216.9 89.8 216.9 90.5 Q216.8 91.2 216.3 91.5 Q215.9 91.8 215.1 91.8 Q214.4 91.9 212.2 92.0 Q210.0 92.0 207.8 92.0 Q205.5 92.1 204.8 91.9 Q204.1 91.8 203.7 91.4 Q203.3 91.1 203.2 90.4 Q203.2 89.8 203.1 87.9 Q203.0 86.0 202.9 84.0 Q202.8 82.0 203.1 81.5 Q203.4 81.0 203.8 80.7 Q204.3 80.4 204.9 80.2 Q205.6 80.0 207.8 79.8 Q210.0 79.5 212.2 79.8 Q214.4 80.0 215.2 80.1 Q215.9 80.2 216.2 80.6 Q216.6 81.0 216.8 81.6 Q217.0 82.1 217.1 84.1Z" fill="#ddc79b" stroke="#a39780" stroke-width="0.9"/>
<path d="M232.3 81.8 Q232.4 85.0 232.3 88.2 Q232.2 91.4 231.9 92.3 Q231.6 93.2 231.2 93.7 Q230.8 94.3 230.2 94.8 Q229.7 95.4 227.3 95.2 Q225.0 95.1 222.8 94.9 Q220.6 94.7 220.0 94.4 Q219.3 94.1 219.0 93.5 Q218.6 93.0 218.2 92.2 Q217.9 91.4 217.9 88.2 Q217.9 85.0 217.8 81.7 Q217.8 78.5 218.2 77.7 Q218.6 77.0 219.0 76.5 Q219.4 76.0 220.0 75.6 Q220.6 75.3 222.8 74.9 Q225.0 74.6 227.2 74.8 Q229.5 75.1 230.2 75.3 Q230.9 75.6 231.4 76.0 Q231.9 76.5 232.0 77.5 Q232.2 78.5 232.3 81.8Z" fill="#dcc699" stroke="#a39780" stroke-width="0.9"/>
<path d="M127.2 55.7 Q127.1 57.5 127.1 59.3 Q127.1 61.1 127.0 61.7 Q127.0 62.3 126.5 62.5 Q126.0 62.6 125.5 62.9 Q125.1 63.1 123.3 63.3 Q121.5 63.4 119.6 63.4 Q117.8 63.3 117.4 63.0 Q117.0 62.6 116.7 62.3 Q116.4 62.0 116.0 61.6 Q115.7 61.2 115.6 59.4 Q115.5 57.5 115.7 55.7 Q115.9 53.9 116.1 53.5 Q116.4 53.0 116.6 52.5 Q116.7 52.0 117.3 52.0 Q117.9 51.9 119.7 51.7 Q121.5 51.6 123.3 51.7 Q125.1 51.8 125.7 52.0 Q126.3 52.1 126.4 52.5 Q126.6 53.0 126.9 53.4 Q127.3 53.8 127.2 55.7Z" fill="#dcc699" stroke="#a39780" stroke-width="0.9"/>
<path d="M185.3 62.7 Q185.3 65.0 185.0 67.2 Q184.6 69.4 184.4 70.1 Q184.2 70.8 183.5 71.3 Q182.9 71.7 181.6 71.7 Q180.3 71.8 176.7 72.2 Q173.0 72.5 169.3 72.2 Q165.6 71.9 164.4 71.7 Q163.3 71.6 162.7 71.1 Q162.1 70.7 161.4 70.2 Q160.6 69.7 160.6 67.3 Q160.5 65.0 160.9 62.8 Q161.4 60.6 161.4 59.8 Q161.5 59.0 162.2 58.6 Q162.9 58.2 164.1 58.0 Q165.3 57.8 169.1 57.7 Q173.0 57.7 176.8 57.8 Q180.5 58.0 181.6 58.2 Q182.8 58.4 183.5 58.8 Q184.1 59.2 184.7 59.8 Q185.3 60.4 185.3 62.7Z" fill="#ddc79b" stroke="#a39780" stroke-width="0.9"/>
<path d="M118.0 60.8 Q118.1 63.0 118.1 65.3 Q118.0 67.5 117.7 68.2 Q117.3 68.8 116.8 69.3 Q116.3 69.7 115.2 69.9 Q114.2 70.1 110.8 70.1 Q107.5 70.2 104.3 70.0 Q101.1 69.8 99.9 69.8 Q98.8 69.7 98.2 69.3 Q97.7 68.8 97.5 68.1 Q97.2 67.4 96.9 65.2 Q96.6 63.0 96.7 60.7 Q96.8 58.4 97.2 57.8 Q97.7 57.2 98.4 56.9 Q99.1 56.5 100.0 56.2 Q100.8 55.9 104.2 56.0 Q107.5 56.0 110.7 56.1 Q114.0 56.1 115.0 56.3 Q116.1 56.4 116.5 56.9 Q117.0 57.3 117.5 57.9 Q117.9 58.5 118.0 60.8Z" fill="#d6bf90" stroke="#a39780" stroke-width="0.9"/>
<path d="M135.0 69.4 Q134.8 72.0 134.7 74.5 Q134.6 77.0 134.6 77.9 Q134.6 78.9 133.8 79.2 Q132.9 79.4 132.0 79.8 Q131.1 80.2 127.6 80.1 Q124.0 79.9 120.4 80.1 Q116.9 80.2 115.8 80.0 Q114.7 79.8 114.1 79.3 Q113.6 78.7 113.2 78.0 Q112.8 77.3 113.0 74.6 Q113.2 72.0 113.3 69.5 Q113.4 67.0 113.5 66.2 Q113.6 65.3 114.2 64.8 Q114.8 64.3 116.0 64.3 Q117.2 64.2 120.6 64.1 Q124.0 64.0 127.6 63.9 Q131.2 63.7 132.1 64.1 Q132.9 64.6 133.7 64.9 Q134.5 65.2 134.9 66.0 Q135.2 66.7 135.0 69.4Z" fill="#cdb586" stroke="#a39780" stroke-width="0.9"/>
<path d="M160.4 65.1 Q160.7 67.5 160.0 69.8 Q159.3 72.2 159.0 72.9 Q158.6 73.7 158.0 74.2 Q157.3 74.7 155.6 74.8 Q153.8 74.9 148.9 75.2 Q144.0 75.5 139.0 75.2 Q134.1 74.9 132.4 74.9 Q130.6 74.8 130.1 74.2 Q129.6 73.6 128.9 72.9 Q128.2 72.3 127.7 69.9 Q127.3 67.5 127.9 65.1 Q128.6 62.8 129.0 62.1 Q129.5 61.4 130.2 60.9 Q130.9 60.4 132.5 60.2 Q134.1 60.0 139.0 60.1 Q144.0 60.1 148.9 60.1 Q153.8 60.1 155.3 60.4 Q156.7 60.6 158.0 60.8 Q159.3 61.0 159.7 61.8 Q160.0 62.6 160.4 65.1Z" fill="#e0cca1" stroke="#a39780" stroke-width="0.9"/>
<path d="M105.2 85.1 Q105.4 87.5 105.0 89.8 Q104.7 92.2 104.5 93.0 Q104.3 93.8 103.8 94.2 Q103.2 94.7 102.2 94.8 Q101.1 95.0 97.8 95.2 Q94.5 95.5 91.1 95.3 Q87.8 95.1 86.8 94.9 Q85.8 94.6 85.1 94.3 Q84.4 93.9 84.4 93.1 Q84.4 92.2 83.9 89.8 Q83.4 87.5 83.6 85.1 Q83.9 82.6 84.3 82.0 Q84.8 81.3 85.2 80.8 Q85.6 80.2 86.8 80.2 Q87.9 80.1 91.2 79.8 Q94.5 79.5 97.9 79.7 Q101.2 79.9 102.1 80.2 Q103.0 80.5 103.8 80.8 Q104.5 81.1 104.7 81.9 Q104.9 82.7 105.2 85.1Z" fill="#dcc699" stroke="#a39780" stroke-width="0.9"/>
<path d="M125.1 82.8 Q125.6 85.0 125.2 87.2 Q124.8 89.4 124.6 90.1 Q124.4 90.9 123.7 91.2 Q123.1 91.5 122.4 91.9 Q121.6 92.4 118.3 92.4 Q115.0 92.4 111.7 92.4 Q108.4 92.3 107.4 92.1 Q106.5 91.9 106.0 91.4 Q105.5 91.0 105.1 90.3 Q104.8 89.6 104.9 87.3 Q105.0 85.0 105.1 82.8 Q105.2 80.6 105.4 79.8 Q105.5 79.1 106.2 78.8 Q106.8 78.4 107.8 78.2 Q108.7 78.0 111.8 78.0 Q115.0 78.0 118.2 78.0 Q121.4 77.9 122.3 78.1 Q123.3 78.3 123.7 78.8 Q124.0 79.4 124.3 80.0 Q124.6 80.6 125.1 82.8Z" fill="#d6bf90" stroke="#a39780" stroke-width="0.9"/>
<path d="M23.4 112.5 Q23.3 116.0 23.3 119.5 Q23.3 122.9 22.9 123.9 Q22.5 124.8 22.0 125.6 Q21.5 126.3 20.4 126.7 Q19.3 127.0 15.5 127.0 Q11.8 126.9 8.0 127.0 Q4.2 127.1 3.2 126.7 Q2.1 126.3 1.6 125.5 Q1.1 124.8 0.4 124.0 Q-0.4 123.2 -0.1 119.6 Q0.1 116.0 0.2 112.6 Q0.4 109.2 0.8 108.2 Q1.1 107.3 1.6 106.4 Q2.0 105.6 3.0 105.2 Q4.1 104.7 7.9 104.6 Q11.7 104.6 15.4 104.8 Q19.1 105.1 20.2 105.5 Q21.2 105.9 21.7 106.6 Q22.3 107.3 22.9 108.1 Q23.6 108.9 23.4 112.5Z" fill="#d6bf90" stroke="#a39780" stroke-width="0.9"/>
<path d="M50.8 112.6 Q51.0 115.2 50.8 117.9 Q50.6 120.6 50.1 121.4 Q49.6 122.2 48.7 122.6 Q47.7 123.0 46.2 123.3 Q44.6 123.5 39.5 123.5 Q34.4 123.5 29.4 123.3 Q24.5 123.2 23.0 123.0 Q21.5 122.8 20.6 122.3 Q19.8 121.8 19.2 121.1 Q18.6 120.4 18.5 117.8 Q18.3 115.3 18.0 112.5 Q17.7 109.8 18.7 109.2 Q19.7 108.6 20.3 108.0 Q20.9 107.4 22.4 107.1 Q23.9 106.8 29.1 106.9 Q34.3 107.0 39.5 107.0 Q44.6 107.0 46.1 107.2 Q47.7 107.5 48.7 107.9 Q49.7 108.3 50.2 109.1 Q50.7 109.9 50.8 112.6Z" fill="#e0cca1" stroke="#a39780" stroke-width="0.9"/>
<path d="M44.2 111.3 Q44.1 112.5 44.1 113.7 Q44.1 114.8 43.9 115.2 Q43.7 115.5 43.4 115.7 Q43.1 115.8 42.7 116.1 Q42.4 116.3 40.7 116.3 Q39.0 116.3 37.3 116.3 Q35.7 116.3 35.3 116.0 Q34.9 115.8 34.5 115.7 Q34.0 115.6 33.9 115.3 Q33.8 114.9 33.8 113.7 Q33.8 112.5 33.8 111.3 Q33.8 110.1 34.0 109.8 Q34.2 109.5 34.5 109.3 Q34.9 109.1 35.3 109.0 Q35.8 108.9 37.4 108.9 Q39.0 108.8 40.6 108.9 Q42.2 109.0 42.7 109.0 Q43.2 109.1 43.6 109.2 Q43.9 109.4 44.1 109.8 Q44.2 110.1 44.2 111.3Z" fill="#ddc79b" stroke="#a39780" stroke-width="0.9"/>
<path d="M66.9 109.7 Q66.8 111.0 66.9 112.3 Q67.1 113.7 66.7 114.1 Q66.4 114.5 65.7 114.7 Q65.1 115.0 64.1 115.1 Q63.0 115.3 59.3 115.4 Q55.5 115.4 51.9 115.3 Q48.3 115.1 47.0 115.1 Q45.7 115.0 45.1 114.8 Q44.4 114.6 44.4 114.1 Q44.4 113.6 44.1 112.3 Q43.8 111.0 44.1 109.7 Q44.4 108.4 44.4 107.9 Q44.4 107.4 45.1 107.2 Q45.8 107.0 47.1 107.0 Q48.4 106.9 51.9 106.9 Q55.5 106.9 59.3 106.8 Q63.0 106.7 63.9 106.9 Q64.7 107.2 65.4 107.4 Q66.1 107.6 66.6 108.0 Q67.0 108.3 66.9 109.7Z" fill="#e0cca1" stroke="#a39780" stroke-width="0.9"/>
<path d="M62.3 118.3 Q62.3 120.0 62.3 121.7 Q62.2 123.3 62.1 123.8 Q62.0 124.3 61.8 124.7 Q61.6 125.0 61.1 125.1 Q60.7 125.1 59.3 125.3 Q58.0 125.4 56.6 125.3 Q55.3 125.2 54.9 125.1 Q54.5 125.0 54.3 124.6 Q54.1 124.2 53.9 123.8 Q53.8 123.3 53.7 121.7 Q53.7 120.0 53.8 118.4 Q53.9 116.8 54.0 116.3 Q54.2 115.9 54.4 115.5 Q54.5 115.1 55.0 115.1 Q55.4 115.0 56.7 114.8 Q58.0 114.6 59.3 114.8 Q60.6 115.0 60.9 115.2 Q61.3 115.4 61.5 115.6 Q61.8 115.9 62.1 116.2 Q62.3 116.6 62.3 118.3Z" fill="#d1b98b" stroke="#a39780" stroke-width="0.9"/>
<path d="M79.6 120.2 Q80.0 122.8 79.6 125.3 Q79.3 127.8 79.1 128.6 Q78.9 129.4 78.5 130.0 Q78.2 130.6 77.3 130.7 Q76.3 130.7 73.7 130.8 Q71.0 130.9 68.3 130.8 Q65.7 130.7 64.7 130.7 Q63.7 130.8 63.2 130.2 Q62.7 129.7 62.7 128.8 Q62.6 127.9 62.2 125.3 Q61.9 122.8 62.1 120.1 Q62.3 117.4 62.6 116.6 Q62.8 115.8 63.2 115.3 Q63.7 114.7 64.5 114.5 Q65.4 114.3 68.2 114.2 Q71.0 114.1 73.7 114.3 Q76.5 114.5 77.2 114.8 Q78.0 115.1 78.4 115.6 Q78.9 116.1 79.1 116.9 Q79.3 117.7 79.6 120.2Z" fill="#ddc79b" stroke="#a39780" stroke-width="0.9"/>
<path d="M36.2 102.3 Q36.4 103.5 36.1 104.6 Q35.9 105.8 35.9 106.2 Q35.8 106.6 35.4 106.8 Q35.0 107.0 34.4 107.1 Q33.8 107.2 31.8 107.2 Q29.8 107.2 27.7 107.2 Q25.6 107.3 25.0 107.1 Q24.4 107.0 24.2 106.7 Q23.9 106.5 23.7 106.2 Q23.5 105.8 23.4 104.7 Q23.4 103.5 23.4 102.3 Q23.5 101.2 23.5 100.8 Q23.6 100.4 24.1 100.3 Q24.7 100.2 25.2 100.0 Q25.6 99.7 27.7 99.7 Q29.7 99.6 31.8 99.7 Q33.9 99.7 34.5 99.9 Q35.0 100.0 35.4 100.2 Q35.7 100.5 35.8 100.8 Q36.0 101.2 36.2 102.3Z" fill="#cdb586" stroke="#a39780" stroke-width="0.9"/>
<path d="M79.4 102.7 Q79.6 104.0 79.5 105.3 Q79.4 106.6 79.1 107.1 Q78.9 107.5 77.8 107.7 Q76.8 107.9 75.6 108.1 Q74.4 108.2 69.8 108.3 Q65.2 108.3 60.7 108.2 Q56.2 108.1 54.6 108.1 Q53.0 108.0 52.6 107.7 Q52.2 107.3 51.3 107.0 Q50.5 106.7 50.7 105.4 Q50.9 104.0 51.2 102.7 Q51.4 101.4 51.7 101.0 Q52.1 100.6 52.6 100.3 Q53.1 100.0 54.4 99.8 Q55.7 99.7 60.4 99.8 Q65.1 99.9 69.7 99.9 Q74.3 99.8 75.6 100.0 Q76.9 100.1 77.9 100.3 Q78.9 100.5 79.0 100.9 Q79.1 101.4 79.4 102.7Z" fill="#e0cca1" stroke="#a39780" stroke-width="0.9"/>
<path d="M79.9 107.0 Q80.1 108.6 79.9 110.2 Q79.7 111.9 79.5 112.4 Q79.3 112.9 78.9 113.1 Q78.4 113.3 78.0 113.6 Q77.5 113.9 75.4 114.0 Q73.3 114.0 71.3 113.8 Q69.3 113.6 68.7 113.5 Q68.2 113.3 67.6 113.1 Q67.1 113.0 66.9 112.5 Q66.8 112.0 66.8 110.3 Q66.8 108.6 66.7 106.9 Q66.6 105.2 67.0 104.8 Q67.3 104.3 67.7 104.1 Q68.2 103.9 68.7 103.7 Q69.3 103.5 71.3 103.5 Q73.3 103.5 75.4 103.4 Q77.5 103.3 78.1 103.5 Q78.8 103.6 79.1 104.0 Q79.4 104.3 79.5 104.8 Q79.7 105.3 79.9 107.0Z" fill="#cdb586" stroke="#a39780" stroke-width="0.9"/>
<path d="M231.8 100.1 Q231.9 102.5 231.8 104.9 Q231.7 107.2 231.6 108.1 Q231.5 108.9 230.6 109.3 Q229.6 109.6 228.4 109.8 Q227.2 110.0 223.1 110.2 Q219.0 110.5 215.0 110.2 Q210.9 109.9 209.7 109.7 Q208.4 109.6 207.6 109.2 Q206.9 108.8 206.4 108.1 Q205.8 107.4 205.7 105.0 Q205.6 102.5 205.8 100.1 Q205.9 97.6 206.5 97.0 Q207.1 96.3 207.8 95.9 Q208.5 95.5 209.8 95.3 Q211.0 95.1 215.0 94.9 Q219.0 94.6 223.2 94.7 Q227.3 94.8 228.6 95.0 Q229.9 95.3 230.3 95.8 Q230.8 96.4 231.3 97.1 Q231.8 97.7 231.8 100.1Z" fill="#ddc79b" stroke="#a39780" stroke-width="0.9"/>
<path d="M231.8 113.2 Q231.9 115.5 231.9 117.9 Q231.8 120.3 231.6 121.0 Q231.4 121.8 230.8 122.3 Q230.2 122.7 229.1 122.9 Q228.0 123.1 224.5 123.1 Q221.0 123.1 217.4 123.2 Q213.9 123.2 212.8 123.0 Q211.7 122.8 211.2 122.3 Q210.6 121.8 210.2 121.1 Q209.8 120.4 209.6 118.0 Q209.4 115.5 209.6 113.0 Q209.8 110.6 210.2 109.9 Q210.6 109.2 211.4 108.8 Q212.1 108.5 213.1 108.3 Q214.2 108.1 217.6 107.8 Q221.0 107.5 224.4 107.8 Q227.9 108.1 229.1 108.1 Q230.4 108.1 231.0 108.6 Q231.7 109.0 231.7 109.9 Q231.7 110.8 231.8 113.2Z" fill="#cdb586" stroke="#a39780" stroke-width="0.9"/>
</g>
<!-- sofa / background -->
<path d="M0 127 L23.5 129 L36 122.6 L79.6 131.7 L88 134 L110 136 L110 298 L0 298 Z" fill="#36322f"/>
<path d="M0 127 L23.5 129 L38 123 L36 150 L30 190 L0 190 Z" fill="#524d49"/>
<path d="M22 124 L39 122.6 L79.6 131.7 L96 137 L100 188 L24 187 L20 160 Z" fill="#5b5651"/>
<path d="M38 123 L32 160 L24 187" fill="none" stroke="#3f3b37" stroke-width="2.5" filter="url(#blur06)"/>
<path d="M40 150 C55 160 70 168 92 176" fill="none" stroke="#4c4844" stroke-width="3" filter="url(#blur06)"/>
<path d="M0 127 L23.5 129 L38 123 L79.6 131.7 L100 138 L100 188 L0 190 Z" fill="#2e2a27" opacity="0.5" filter="url(#tex)"/>
<path d="M0 188 C30 186 70 186 100 188 L100 230 L0 232 Z" fill="#34302c"/>
<path d="M0 188 C30 187 70 188 100 190 L100 194 C70 192 30 191 0 192 Z" fill="#2a2623" opacity="0.6" filter="url(#blur06)"/>
<rect x="186" y="118" width="46" height="112" fill="#4a4642"/>
<path d="M100 140 L190 140 L199 200 L214 213 L232 221 L232 298 L112 298 L106 214 Z" fill="#d9c2ae"/>
<!-- neck -->
<path d="M148 232 C160 222 176 205 188 168 L197 166 C199 190 204 206 214 214 L232 222 L232 242 C215 246 200 252 188 252 C175 250 160 242 148 232 Z" fill="url(#neckg)"/>
<path d="M212 210 C222 212 228 218 232 222 L232 234 C226 230 220 226 212 222 Z" fill="#e3d6c3"/>
<!-- face -->
<path d="M82 110 C81 135 84 155 89 170 C93 185 100 198 108 205 C116 212 124 222 132 228 C140 233 150 233 156 229 C164 222 178 204 192 166 L194 125 C185 100 170 84 150 80 C130 77 110 78 95 86 C88 92 83 100 82 110 Z" fill="url(#faceg)"/>
<!-- ear -->
<path d="M189 124 C195 116 206 114 210 122 C213 132 210 150 204 160 C200 166 194 168 189 166 Z" fill="#ddb79e"/>
<path d="M196 127 C202 123 207 127 206 135 C205 146 200 153 196 151 Z" fill="#cda48a" opacity="0.6"/>
<!-- hair -->
<path d="M79 131 L79 118 C80 108 82 102 83.5 98 C88 88 92 81 96.6 76.6 C104 70 110 66 118.3 64.6 C126 62 134 61 140 61.4 C148 61.5 155 62.5 161.7 64.6 C170 68 177 72 183.4 76.6 C190 82 195 87 198.6 91.8 C202 97 205 103 206 109 C207 114 207.5 119 207.3 124.3 L204 132 C201 124 198 119 194.3 126.5 C192 122 191 121 190 120 C187 114 184 110 181 107 C176 101 172 97 168 94 C162 89 156 86 150.8 85.3 C144 84 136 83 129 83 C122 83 116 84 111.8 85.3 C106 88 100 91 96.6 94 C92 99 86 107 83.5 113.5 C82 120 82 126 82 131 Z" fill="#34251e"/>
<path d="M110 70 C130 64 150 64 170 72 C150 70 130 70 112 76 Z" fill="#5a463a" opacity="0.3"/>
<path d="M185 85 C195 95 202 108 203 122 C198 110 192 98 183 90 Z" fill="#4e3c32" opacity="0.3"/>
<!-- eyebrows -->
<path d="M84 137 C90 134 97 135 101 138 C96 139 90 139 84 142 Z" fill="#6a5752"/>
<path d="M119 128 C130 122 145 120 157 124 C146 124 132 127 120 134 Z" fill="#6a5752"/>
<!-- eyes -->
<path d="M89 154 C93 150 102 149 108 153 C103 157 95 158 89 156 Z" fill="#ddd0ca"/>
<ellipse cx="100.5" cy="153.5" rx="4.5" ry="3.8" fill="#1e1512"/>
<path d="M88 153 C93 149 103 148 109 152" fill="none" stroke="#3a2a25" stroke-width="1.1"/>
<path d="M128 147 C133 140 144 137 151 141 C147 147 138 150 128 148.5 Z" fill="#ddd0ca"/>
<ellipse cx="141.5" cy="143.5" rx="5.3" ry="4.3" fill="#1e1512"/>
<path d="M127 147 C133 140 144 136 152 140" fill="none" stroke="#3a2a25" stroke-width="1.2"/>
<!-- nose -->
<ellipse cx="122" cy="185" rx="11" ry="6" fill="#c39480" opacity="0.3" filter="url(#blur2)"/>
<ellipse cx="118" cy="180" rx="5" ry="3.5" fill="#f0d8c6" opacity="0.6" filter="url(#blur2)"/>
<!-- lips -->
<path d="M119 200 C126 196 138 195 147 193 C146 200 140 208 130 210 C123 210 119 205 119 200 Z" fill="#d8847e"/>
<path d="M119 200 C128 199 138 197 147 193" fill="none" stroke="#b86a64" stroke-width="0.9"/>
<!-- sweater -->
<path d="M108 207 C112 209 116 213 119 216 C124 222 128 228 133.6 231 C140 233.5 148 233 153.5 232.7 C158 235 160 238 164 240 C170 244 176 246 182 247 C188 249 192 249 196 249 C205 247 220 238 232 228.3 L232 298 L85 298 C87 285 90 275 92 264 C93 250 94 232 95.7 218 C99 213 104 209 108 207 Z" fill="#e8e4de"/>
<path d="M154 233 C160 240 168 247 178 250 C190 252 205 247 218 240 C224 236 228 232 232 228 L232 252 C220 260 200 266 180 264 C168 260 158 250 150 238 Z" fill="#f0ece6" opacity="0.8"/>

<path d="M184 270 C197 264 215 258 236 252 L236 302 L180 302 Z" fill="#d6cdc2" opacity="0.7" filter="url(#blur3)"/>
<ellipse cx="206.7" cy="264.9" rx="1.30" ry="1.96" fill="#735c48" opacity="0.75"/>
<ellipse cx="211.9" cy="263.9" rx="1.38" ry="1.82" fill="#735c48" opacity="0.75"/>
<ellipse cx="221.0" cy="263.2" rx="1.19" ry="1.62" fill="#735c48" opacity="0.75"/>
<ellipse cx="227.1" cy="264.1" rx="1.01" ry="1.61" fill="#735c48" opacity="0.75"/>
<ellipse cx="202.0" cy="269.6" rx="1.31" ry="1.58" fill="#735c48" opacity="0.75"/>
<ellipse cx="210.2" cy="268.1" rx="1.25" ry="1.56" fill="#735c48" opacity="0.75"/>
<ellipse cx="215.3" cy="269.5" rx="1.08" ry="1.61" fill="#735c48" opacity="0.75"/>
<ellipse cx="224.7" cy="269.5" rx="1.12" ry="1.98" fill="#735c48" opacity="0.75"/>
<ellipse cx="230.6" cy="269.2" rx="1.08" ry="1.97" fill="#735c48" opacity="0.75"/>
<ellipse cx="199.5" cy="274.5" rx="1.36" ry="1.65" fill="#735c48" opacity="0.75"/>
<ellipse cx="205.7" cy="272.9" rx="1.06" ry="1.53" fill="#735c48" opacity="0.75"/>
<ellipse cx="212.5" cy="273.8" rx="1.00" ry="1.84" fill="#735c48" opacity="0.75"/>
<ellipse cx="219.6" cy="273.2" rx="1.33" ry="1.74" fill="#735c48" opacity="0.75"/>
<ellipse cx="226.6" cy="273.6" rx="1.28" ry="1.53" fill="#735c48" opacity="0.75"/>
<ellipse cx="203.6" cy="277.4" rx="1.30" ry="1.92" fill="#735c48" opacity="0.75"/>
<ellipse cx="208.3" cy="279.0" rx="1.15" ry="1.79" fill="#735c48" opacity="0.75"/>
<ellipse cx="215.3" cy="277.5" rx="1.07" ry="1.98" fill="#735c48" opacity="0.75"/>
<ellipse cx="222.8" cy="278.9" rx="1.37" ry="1.97" fill="#735c48" opacity="0.75"/>
<ellipse cx="230.1" cy="278.1" rx="1.21" ry="1.89" fill="#735c48" opacity="0.75"/>
<ellipse cx="198.1" cy="283.7" rx="1.32" ry="1.93" fill="#735c48" opacity="0.75"/>
<ellipse cx="204.9" cy="284.1" rx="1.04" ry="1.67" fill="#735c48" opacity="0.75"/>
<ellipse cx="213.3" cy="284.0" rx="1.14" ry="1.96" fill="#735c48" opacity="0.75"/>
<ellipse cx="220.1" cy="282.8" rx="1.13" ry="1.59" fill="#735c48" opacity="0.75"/>
<ellipse cx="226.0" cy="282.5" rx="1.28" ry="2.00" fill="#735c48" opacity="0.75"/>
<ellipse cx="201.7" cy="287.1" rx="1.39" ry="1.77" fill="#735c48" opacity="0.75"/>
<ellipse cx="209.3" cy="287.5" rx="1.24" ry="1.91" fill="#735c48" opacity="0.75"/>
<ellipse cx="216.4" cy="287.8" rx="1.02" ry="1.96" fill="#735c48" opacity="0.75"/>
<ellipse cx="222.4" cy="288.0" rx="1.34" ry="1.57" fill="#735c48" opacity="0.75"/>
<ellipse cx="231.1" cy="288.9" rx="1.25" ry="1.89" fill="#735c48" opacity="0.75"/>
<ellipse cx="198.1" cy="292.7" rx="1.06" ry="1.92" fill="#735c48" opacity="0.75"/>
<ellipse cx="205.5" cy="292.7" rx="1.40" ry="1.93" fill="#735c48" opacity="0.75"/>
<ellipse cx="214.1" cy="292.7" rx="1.20" ry="1.86" fill="#735c48" opacity="0.75"/>
<ellipse cx="219.9" cy="292.4" rx="1.16" ry="1.57" fill="#735c48" opacity="0.75"/>
<ellipse cx="226.7" cy="293.8" rx="1.38" ry="1.81" fill="#735c48" opacity="0.75"/>
<ellipse cx="202.5" cy="297.3" rx="1.04" ry="1.64" fill="#735c48" opacity="0.75"/>
<ellipse cx="210.2" cy="298.3" rx="1.14" ry="1.89" fill="#735c48" opacity="0.75"/>
<ellipse cx="217.2" cy="298.0" rx="1.27" ry="1.88" fill="#735c48" opacity="0.75"/>
<ellipse cx="223.2" cy="298.0" rx="1.11" ry="1.74" fill="#735c48" opacity="0.75"/>
<ellipse cx="231.1" cy="298.0" rx="1.12" ry="1.97" fill="#735c48" opacity="0.75"/>
<ellipse cx="189.7" cy="285.9" rx="0.9" ry="1.2" fill="#8a7560" opacity="0.5"/>
<ellipse cx="178.2" cy="285.1" rx="0.9" ry="1.2" fill="#8a7560" opacity="0.5"/>
<ellipse cx="182.5" cy="288.1" rx="0.9" ry="1.2" fill="#8a7560" opacity="0.5"/>
<ellipse cx="186.3" cy="291.6" rx="0.9" ry="1.2" fill="#8a7560" opacity="0.5"/>
<ellipse cx="189.7" cy="291.1" rx="0.9" ry="1.2" fill="#8a7560" opacity="0.5"/>
<ellipse cx="184.3" cy="287.5" rx="0.9" ry="1.2" fill="#8a7560" opacity="0.5"/>
<path d="M108 207 C112 209 116 213 119 216 C124 222 128 228 133.6 231 C140 233.5 148 233 153.5 232.7 C158 235 160 238 164 240 C170 244 176 246 182 247 C188 249 192 249 196 249 C205 247 220 238 232 228.3 L232 298 L85 298 C87 285 90 275 92 264 C93 250 94 232 95.7 218 C99 213 104 209 108 207 Z" fill="#b5aca2" opacity="0.35" filter="url(#tex)"/>
<!-- hand -->
<path d="M0 230 C6 229 12 231 17 236 L17.7 288 C12 290 6 290 0 290 Z" fill="#dcbba4"/>
<path d="M0 248 C6 247 12 248 17 251 M0 262 C6 261 12 262 17 265 M0 276 C6 275 12 276 17 278" fill="none" stroke="#b8927c" stroke-width="0.9"/>
<path d="M3.5 222 C10 219 20 217 27.4 218.5 C28 224 26 230 20 231 C14 232 8 230 4 228 Z" fill="#d9b49c"/>
<ellipse cx="9" cy="224.3" rx="6" ry="2.4" fill="#c42b26"/>
<path d="M0 288 L17 288 L17 298 L0 298 Z" fill="#2b2522"/>
<!-- mug body -->
<path d="M16.8 236 L16.8 298 L84 298 L91.2 236 Z" fill="#22337a"/>
<g clip-path="url(#mugclip)" fill="#e2301f">
<circle cx="61.2" cy="257.5" r="7.3"/>
<circle cx="72.8" cy="263.8" r="7.3"/>
<circle cx="69.7" cy="275.6" r="7.3"/>
<circle cx="56.3" cy="276.7" r="7.3"/>
<circle cx="51.0" cy="265.5" r="7.3"/>
<circle cx="62.2" cy="267.8" r="10.3"/>
<circle cx="28.5" cy="249.0" r="6.0"/>
<circle cx="32.8" cy="257.7" r="6.0"/>
<circle cx="24.9" cy="264.1" r="6.0"/>
<circle cx="15.8" cy="259.3" r="6.0"/>
<circle cx="18.0" cy="250.0" r="6.0"/>
<circle cx="24.0" cy="256.0" r="8.1"/>
<circle cx="45.4" cy="287.1" r="7.0"/>
<circle cx="55.9" cy="293.9" r="7.0"/>
<circle cx="51.9" cy="305.0" r="7.0"/>
<circle cx="38.9" cy="305.0" r="7.0"/>
<circle cx="34.9" cy="293.9" r="7.0"/>
<circle cx="45.4" cy="297.0" r="9.9"/>
<circle cx="25.0" cy="285.0" r="5.5"/>
<circle cx="19.5" cy="291.8" r="5.5"/>
<circle cx="10.5" cy="289.2" r="5.5"/>
<circle cx="10.5" cy="280.8" r="5.5"/>
<circle cx="19.5" cy="278.2" r="5.5"/>
<circle cx="17.0" cy="285.0" r="7.2"/>
<circle cx="78.0" cy="275.0" r="6.5"/>
<circle cx="84.9" cy="266.4" r="6.5"/>
<circle cx="96.1" cy="269.7" r="6.5"/>
<circle cx="96.1" cy="280.3" r="6.5"/>
<circle cx="84.9" cy="283.6" r="6.5"/>
<circle cx="88.0" cy="275.0" r="9.0"/>
</g>
<g clip-path="url(#mugclip)">
 <ellipse cx="62.2" cy="267.8" rx="9.4" ry="7.9" fill="#fff"/>
 <ellipse cx="62.6" cy="267.8" rx="6.3" ry="5" fill="#22337a"/>
 <ellipse cx="22.4" cy="253.6" rx="3.7" ry="6.3" fill="#fff"/>
 <ellipse cx="45.4" cy="298" rx="8" ry="4" fill="#fff"/>
</g>
<!-- rim & coffee -->
<ellipse cx="54" cy="236" rx="37.2" ry="17" fill="#ebe1cf"/>
<ellipse cx="55.5" cy="241.5" rx="31.5" ry="10.5" fill="#7f5e46"/>
<path d="M24 241 C30 232 45 228 56 228 C70 228 82 232 87 240 C80 236 68 233 56 233 C44 233 32 236 24 241 Z" fill="#d9ccb5"/>

</symbol>
</defs>

<!-- group lines -->
<path d="M0 216 H1239.5 V0" fill="none" stroke="#25365a" stroke-width="2"/>

<!-- links -->
<path d="M416 115.4 C450 115.4 490 119.2 515 119.2" fill="none" stroke="rgba(0,0,0,0.5)" stroke-width="6"/>
<path d="M416 115.4 C450 115.4 490 119.2 515 119.2" fill="none" stroke="#fff" stroke-width="3"/>
<circle cx="465.3" cy="116.8" r="5" fill="#fff"/>
<path d="M831 119 C860 119 900 114.3 929.5 114.3" fill="none" stroke="rgba(0,0,0,0.5)" stroke-width="6"/>
<path d="M831 119 C860 119 900 114.3 929.5 114.3" fill="none" stroke="#64b5f6" stroke-width="3"/>
<circle cx="879.8" cy="116.3" r="5" fill="#64b5f6"/>

<!-- Load Image node -->
<rect x="94" y="64.9" width="328" height="356.2" rx="16" fill="none" stroke="#a8a8a8" stroke-width="2"/>
<g filter="url(#sh)">
<rect x="100" y="71" width="316" height="344" rx="8" fill="#353535"/>
</g>
<path d="M100 101.5 H416" stroke="#2c2c2c" stroke-width="1"/>
<circle cx="115" cy="86" r="5" fill="#666"/>
<text x="130" y="91" font-size="14" fill="#fff" stroke="#fff" stroke-width="0.3">Load Image</text>
<text x="396" y="120" font-size="12" fill="#aaa" text-anchor="end" stroke="#aaa" stroke-width="0.3">IMAGE</text>
<text x="396" y="139.5" font-size="12" fill="#aaa" text-anchor="end" stroke="#aaa" stroke-width="0.3">MASK</text>
<circle cx="406" cy="114.9" r="4.2" fill="#64b5f6" stroke="#000" stroke-width="1.3"/>
<circle cx="406" cy="134.8" r="4.2" fill="#81c784" stroke="#000" stroke-width="1.3"/>
<rect x="115" y="147" width="286" height="20" rx="10" fill="#222" stroke="#666" stroke-width="1"/>
<path d="M121 157 L131 152 L131 162 Z" fill="#ddd"/>
<text x="135" y="161" font-size="12" fill="#999" stroke="#999" stroke-width="0.3">image</text>
<text x="365.5" y="161" font-size="12" fill="#ddd" text-anchor="end" stroke="#ddd" stroke-width="0.3">0.png</text>
<path d="M394 157 L384 152 L384 162 Z" fill="#ddd"/>
<rect x="115" y="171" width="286" height="20" rx="2" fill="#222" stroke="#666" stroke-width="1"/>
<text x="258" y="185" font-size="12" fill="#ddd" text-anchor="middle" stroke="#ddd" stroke-width="0.3">choose file to upload</text>
<svg x="172" y="195" width="171" height="220"><use href="#photo" width="171" height="220"/></svg>

<!-- Image To Device -->
<rect x="515" y="55" width="44" height="20" rx="5" fill="#353535"/>
<text x="523" y="69.5" font-size="12" fill="#aaa" stroke="#aaa" stroke-width="0.3">0.02s</text>
<g filter="url(#sh)">
<rect x="515.3" y="75.5" width="315.7" height="87.4" rx="8" fill="#353535"/>
</g>
<path d="M515.3 105.8 H831" stroke="#2c2c2c" stroke-width="1"/>
<circle cx="530.3" cy="90.5" r="5" fill="#666"/>
<mask id="wm" maskUnits="userSpaceOnUse" x="-12" y="-12" width="24" height="24">
 <rect x="-12" y="-12" width="24" height="24" fill="#fff"/>
 <rect x="-1.15" y="-10.6" width="2.3" height="3.8" fill="#000"/>
 <rect x="-1.15" y="6.8" width="2.3" height="3.8" fill="#000"/>
</mask>
<g fill="#c2b7cf" transform="translate(554.6 90) rotate(-45)">
 <g mask="url(#wm)">
 <rect x="-1.2" y="-5" width="2.4" height="10"/>
 <circle cx="0" cy="-5.9" r="3"/>
 <circle cx="0" cy="5.9" r="3"/>
 </g>
</g>
<text x="568" y="95" font-size="14" fill="#999" stroke="#999" stroke-width="0.3">Image To Device</text>
<circle cx="525.3" cy="119.3" r="4" fill="#64b5f6"/>
<text x="535" y="123.5" font-size="12" fill="#aaa" stroke="#aaa" stroke-width="0.3">image</text>
<text x="811" y="123.5" font-size="12" fill="#aaa" text-anchor="end" stroke="#aaa" stroke-width="0.3">IMAGE</text>
<circle cx="821" cy="119.2" r="4.2" fill="#64b5f6" stroke="#000" stroke-width="1.3"/>
<rect x="530.3" y="131" width="285" height="20" rx="10" fill="#222" stroke="#666" stroke-width="1"/>
<path d="M536.5 141 L546.5 136 L546.5 146 Z" fill="#ddd"/>
<text x="550.5" y="145" font-size="12" fill="#999" stroke="#999" stroke-width="0.3">device</text>
<text x="780" y="145" font-size="12" fill="#ddd" text-anchor="end" stroke="#ddd" stroke-width="0.3">auto</text>
<path d="M809 141 L799 136 L799 146 Z" fill="#ddd"/>

<!-- Preview Image -->
<rect x="929.4" y="50" width="44" height="20" rx="5" fill="#353535"/>
<text x="937" y="64.5" font-size="12" fill="#aaa" stroke="#aaa" stroke-width="0.3">0.20s</text>
<g filter="url(#sh)">
<rect x="929.4" y="70" width="267.4" height="353.6" rx="8" fill="#353535"/>
</g>
<path d="M929.4 100.5 H1196.8" stroke="#2c2c2c" stroke-width="1"/>
<circle cx="944.4" cy="85" r="5" fill="#666"/>
<text x="959.5" y="90" font-size="14" fill="#999" stroke="#999" stroke-width="0.3">Preview Image</text>
<circle cx="939.4" cy="114.5" r="4" fill="#64b5f6"/>
<text x="949.4" y="118.7" font-size="12" fill="#aaa" stroke="#aaa" stroke-width="0.3">images</text>
<svg x="946" y="126" width="232" height="298"><use href="#photo" width="232" height="298"/></svg>
</svg>
</body></html>
